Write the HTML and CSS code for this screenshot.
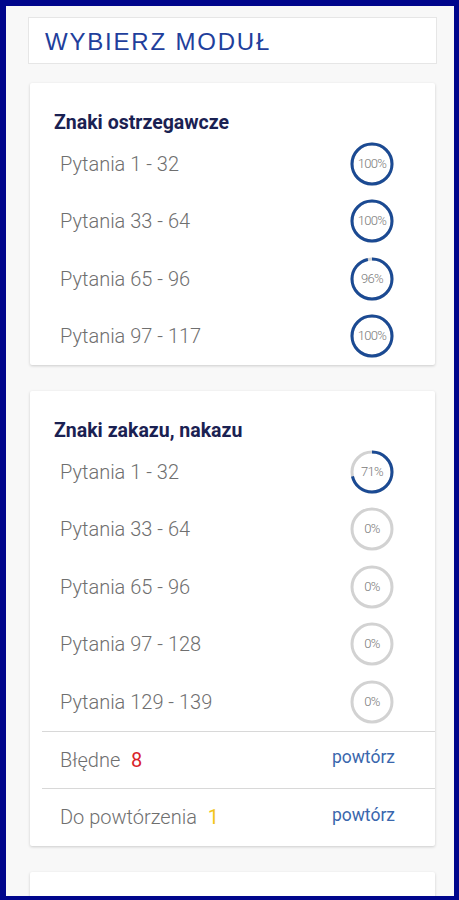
FILE: index.html
```html
<!DOCTYPE html>
<html lang="pl">
<head>
    <meta charset="UTF-8">
    <meta name="viewport" content="width=device-width, initial-scale=1.0">
    <title>Wybierz moduł</title>
    <link rel="stylesheet" href="styles.css">
</head>
<body>
    <div class="screen">
        <div class="header">WYBIERZ MODUŁ</div>

        <!-- Znaki ostrzegawcze -->
        <div class="card">
            <div class="card-title">Znaki ostrzegawcze</div>
            <div class="row">
                <span>Pytania 1 - 32</span>
                <div class="ring">
                    <svg viewBox="0 0 44 44"><circle class="track" cx="22" cy="22" r="20"/><circle class="bar" cx="22" cy="22" r="20" style="stroke-dasharray: 125.66 125.66"/></svg>
                    <span>100%</span>
                </div>
            </div>
            <div class="row">
                <span>Pytania 33 - 64</span>
                <div class="ring">
                    <svg viewBox="0 0 44 44"><circle class="track" cx="22" cy="22" r="20"/><circle class="bar" cx="22" cy="22" r="20" style="stroke-dasharray: 125.66 125.66"/></svg>
                    <span>100%</span>
                </div>
            </div>
            <div class="row">
                <span>Pytania 65 - 96</span>
                <div class="ring">
                    <svg viewBox="0 0 44 44"><circle class="track" cx="22" cy="22" r="20"/><circle class="bar" cx="22" cy="22" r="20" style="stroke-dasharray: 120.63 125.66"/></svg>
                    <span>96%</span>
                </div>
            </div>
            <div class="row">
                <span>Pytania 97 - 117</span>
                <div class="ring">
                    <svg viewBox="0 0 44 44"><circle class="track" cx="22" cy="22" r="20"/><circle class="bar" cx="22" cy="22" r="20" style="stroke-dasharray: 125.66 125.66"/></svg>
                    <span>100%</span>
                </div>
            </div>
        </div>

        <!-- Znaki zakazu, nakazu -->
        <div class="card">
            <div class="card-title">Znaki zakazu, nakazu</div>
            <div class="row">
                <span>Pytania 1 - 32</span>
                <div class="ring">
                    <svg viewBox="0 0 44 44"><circle class="track" cx="22" cy="22" r="20"/><circle class="bar" cx="22" cy="22" r="20" style="stroke-dasharray: 89.22 125.66"/></svg>
                    <span>71%</span>
                </div>
            </div>
            <div class="row">
                <span>Pytania 33 - 64</span>
                <div class="ring">
                    <svg viewBox="0 0 44 44"><circle class="track" cx="22" cy="22" r="20"/></svg>
                    <span>0%</span>
                </div>
            </div>
            <div class="row">
                <span>Pytania 65 - 96</span>
                <div class="ring">
                    <svg viewBox="0 0 44 44"><circle class="track" cx="22" cy="22" r="20"/></svg>
                    <span>0%</span>
                </div>
            </div>
            <div class="row">
                <span>Pytania 97 - 128</span>
                <div class="ring">
                    <svg viewBox="0 0 44 44"><circle class="track" cx="22" cy="22" r="20"/></svg>
                    <span>0%</span>
                </div>
            </div>
            <div class="row">
                <span>Pytania 129 - 139</span>
                <div class="ring">
                    <svg viewBox="0 0 44 44"><circle class="track" cx="22" cy="22" r="20"/></svg>
                    <span>0%</span>
                </div>
            </div>
            <div class="repeat">
                <span>Błędne <b class="count wrong">8</b></span>
                <a class="link">powtórz</a>
            </div>
            <div class="repeat">
                <span>Do powtórzenia <b class="count later">1</b></span>
                <a class="link">powtórz</a>
            </div>
        </div>

        <div class="card card-next"></div>
    </div>
</body>
</html>
```

FILE: styles.css
```css
html, body {
    margin: 0;
    height: 100%;
}
body {
    font-family: 'Roboto', 'Liberation Sans', sans-serif;
    background-color: #00068c;
    overflow: hidden;
}
.screen {
    box-sizing: border-box;
    height: 900px;
    border-style: solid;
    border-color: #00068c;
    border-width: 6px 5px 4px 6px;
    background-color: #f8f8f8;
    padding: 11px 17px 0 22px;
    overflow: hidden;
}
.header {
    box-sizing: border-box;
    width: 409px;
    height: 47px;
    background-color: white;
    border: 1px solid #e6e6e6;
    padding-left: 16px;
    font-family: 'Liberation Sans', Arial, sans-serif;
    font-size: 24px;
    letter-spacing: 1.8px;
    color: #1f3f9c;
    line-height: 47px;
}
.card {
    width: 405px;
    margin: 19px 0 0 2px;
    background-color: white;
    border-radius: 2px;
    box-shadow: 0 1px 3px rgba(0, 0, 0, 0.18);
    padding: 28px 0 0 0;
}
.card + .card {
    margin-top: 26px;
}
.card-title {
    padding-left: 24px;
    font-size: 19.5px;
    font-weight: bold;
    line-height: 24px;
    color: #1a2152;
}
.row {
    height: 57.5px;
    display: flex;
    align-items: center;
    justify-content: space-between;
    padding: 0 41px 0 30px;
    font-size: 20px;
    font-weight: 300;
    color: #6f6f6f;
}
.ring {
    position: relative;
    width: 44px;
    height: 44px;
}
.ring svg {
    width: 44px;
    height: 44px;
    transform: rotate(-90deg);
}
.ring circle {
    fill: none;
    stroke-width: 3;
}
.ring .track {
    stroke: #d2d2d2;
}
.ring .bar {
    stroke: #1b4a93;
}
.ring span {
    position: absolute;
    top: 0;
    left: 0;
    width: 100%;
    line-height: 44px;
    text-align: center;
    font-size: 13px;
    font-weight: 300;
    color: #7a7a7a;
    letter-spacing: -0.7px;
}
.repeat {
    box-sizing: border-box;
    height: 57.5px;
    margin-left: 12px;
    border-top: 1px solid #d8d8d8;
    display: flex;
    align-items: center;
    justify-content: space-between;
    padding: 0 40px 0 18px;
    font-size: 20px;
    font-weight: 300;
    color: #6f6f6f;
}
.count {
    font-weight: normal;
    margin-left: 6px;
}
.wrong {
    color: #d9232b;
}
.later {
    color: #f2c419;
}
.link {
    font-size: 17.5px;
    font-weight: normal;
    color: #3a67ad;
    margin-top: -5px;
}
.card-next {
    height: 60px;
    margin-top: 24px;
    padding: 0;
}
```
